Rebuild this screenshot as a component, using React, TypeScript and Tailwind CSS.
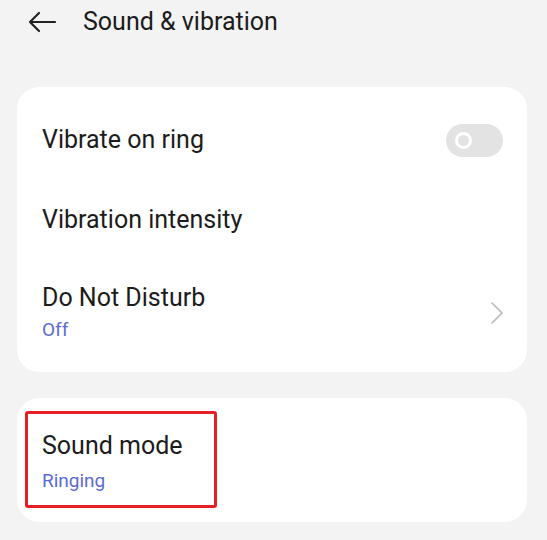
import React from "react";

const Toggle = () => (
  <div className="w-[57px] h-[33px] rounded-full bg-[#e3e3e3] flex items-center pl-[9px]">
    <div className="w-[17px] h-[17px] rounded-full border-[3px] border-white bg-[#e3e3e3]" />
  </div>
);

const Chevron = () => (
  <svg width="14" height="24" viewBox="0 0 14 24" fill="none">
    <path d="M2 2 L12 12 L2 22" stroke="#b8b8b8" strokeWidth="1.6" strokeLinecap="round" strokeLinejoin="round" />
  </svg>
);

const App = () => {
  return (
    <div
      className="w-[547px] h-[540px] bg-[#f3f3f3] overflow-hidden text-[#1c1c1c]"
      style={{ fontFamily: "Roboto, 'Noto Sans', sans-serif" }}
    >
      {/* Header */}
      <div className="flex items-center h-[44px]">
        <svg className="ml-[27px]" width="30" height="24" viewBox="0 0 30 24" fill="none">
          <path d="M28 12 H3 M12 3 L3 12 L12 21" stroke="#222" strokeWidth="2.2" strokeLinecap="round" strokeLinejoin="round" />
        </svg>
        <div className="ml-[26px] text-[25px] leading-[30px]">Sound &amp; vibration</div>
      </div>

      {/* Card 1 */}
      <div className="mt-[43px] ml-[17px] w-[510px] bg-white rounded-[22px] h-[285px] pt-[13px]">
        <div className="flex items-center justify-between h-[80px] pl-[25px] pr-[24px]">
          <div className="text-[25px] leading-[30px]">Vibrate on ring</div>
          <Toggle />
        </div>
        <div className="flex items-center h-[80px] pl-[25px]">
          <div className="text-[25px] leading-[30px]">Vibration intensity</div>
        </div>
        <div className="flex items-center justify-between pl-[25px] pr-[23px] pt-[23px]">
          <div>
            <div className="text-[25px] leading-[30px]">Do Not Disturb</div>
            <div className="mt-[4px] text-[19px] leading-[26px] text-[#5b6bd5]">Off</div>
          </div>
          <Chevron />
        </div>
      </div>

      {/* Card 2 */}
      <div className="mt-[26px] ml-[17px] w-[510px] bg-white rounded-[22px] h-[124px] pt-[13px]">
        <div className="ml-[8px] w-[192px] h-[97px] border-[3px] border-[#e41f28] rounded-[3px] pl-[14px] pt-[17px]">
          <div className="text-[25px] leading-[30px]">Sound mode</div>
          <div className="mt-[7px] text-[19px] leading-[26px] text-[#5b6bd5]">Ringing</div>
        </div>
      </div>
    </div>
  );
};

export default App;
